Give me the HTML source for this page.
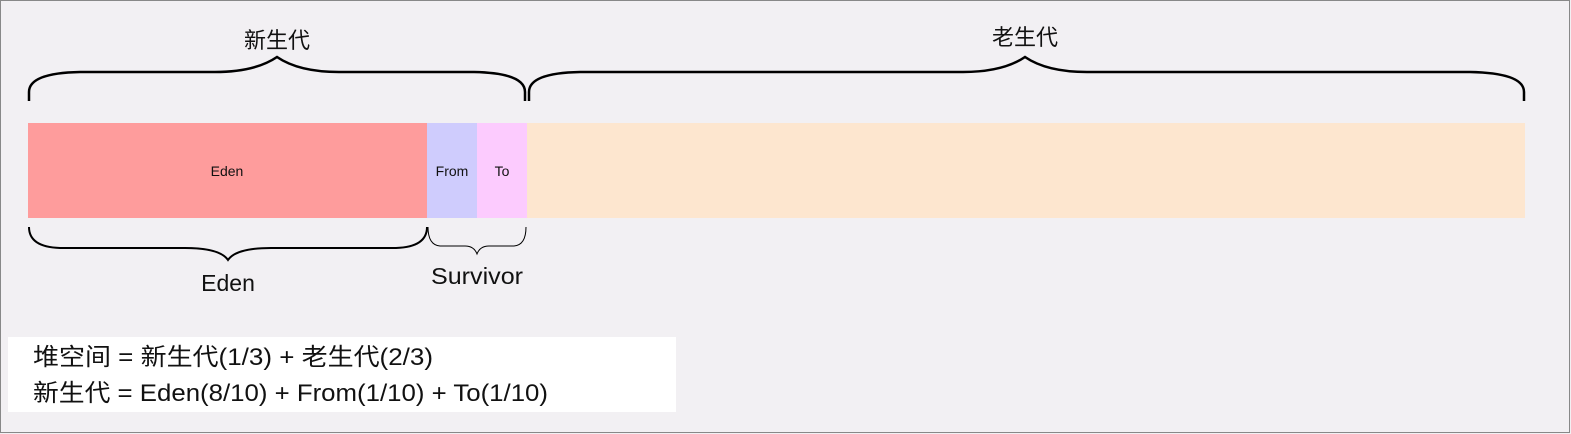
<!DOCTYPE html>
<html><head><meta charset="utf-8"><style>
html,body{margin:0;padding:0;}
body{width:1571px;height:434px;overflow:hidden;background:#f2f0f3;}
svg{display:block;}
text{font-family:"Liberation Sans","Noto Sans CJK SC",sans-serif;fill:#111;}
</style></head><body>
<svg width="1571" height="434" viewBox="0 0 1571 434" xmlns="http://www.w3.org/2000/svg">
<rect x="0.5" y="0.5" width="1569" height="432" fill="#f2f0f3" stroke="#888" stroke-width="1"/>
<rect x="28" y="123" width="399" height="95" fill="#fe9c9c"/>
<rect x="427" y="123" width="50" height="95" fill="#cfccfd"/>
<rect x="477" y="123" width="50" height="95" fill="#fccbfe"/>
<rect x="527" y="123" width="998" height="95" fill="#fde6cf"/>
<text x="227" y="176" font-size="14" text-anchor="middle">Eden</text>
<text x="452" y="176" font-size="14" text-anchor="middle">From</text>
<text x="502" y="176" font-size="14" text-anchor="middle">To</text>
<text x="277" y="48" font-size="22" text-anchor="middle">新生代</text>
<text x="1025" y="45" font-size="22" text-anchor="middle">老生代</text>
<g fill="none" stroke="#000">
<path d="M29 101 L29 92 Q29 73 80 72 L215 72 Q255 72 277 57 Q299 72 339 72 L474 72 Q525 73 525 92 L525 101" stroke-width="2.5"/>
<path d="M529 101 L529 92 Q529 73 580 72 L963 72 Q1003 72 1025 57 Q1047 72 1087 72 L1470 72 Q1524 73 1524 92 L1524 101" stroke-width="2.5"/>
<path d="M29 227 Q29 247 60 248 L185 248 Q220 248 228 260 Q236 248 271 248 L396 248 Q427 247 427 227" stroke-width="2"/>
<path d="M428 227 Q428 245 440 246 L465 246 Q474 246 477 254 Q480 246 489 246 L514 246 Q526 245 526 227" stroke-width="1"/>
</g>
<text x="228" y="291" font-size="23" text-anchor="middle">Eden</text>
<text x="431" y="284" font-size="23" textLength="92" lengthAdjust="spacingAndGlyphs">Survivor</text>
<rect x="8" y="337" width="668" height="75" fill="#fff"/>
<text x="33" y="365" font-size="24" textLength="400" lengthAdjust="spacingAndGlyphs">堆空间 = 新生代(1/3) + 老生代(2/3)</text>
<text x="33" y="401" font-size="24" textLength="515" lengthAdjust="spacingAndGlyphs">新生代 = Eden(8/10) + From(1/10) + To(1/10)</text>
</svg>
</body></html>
